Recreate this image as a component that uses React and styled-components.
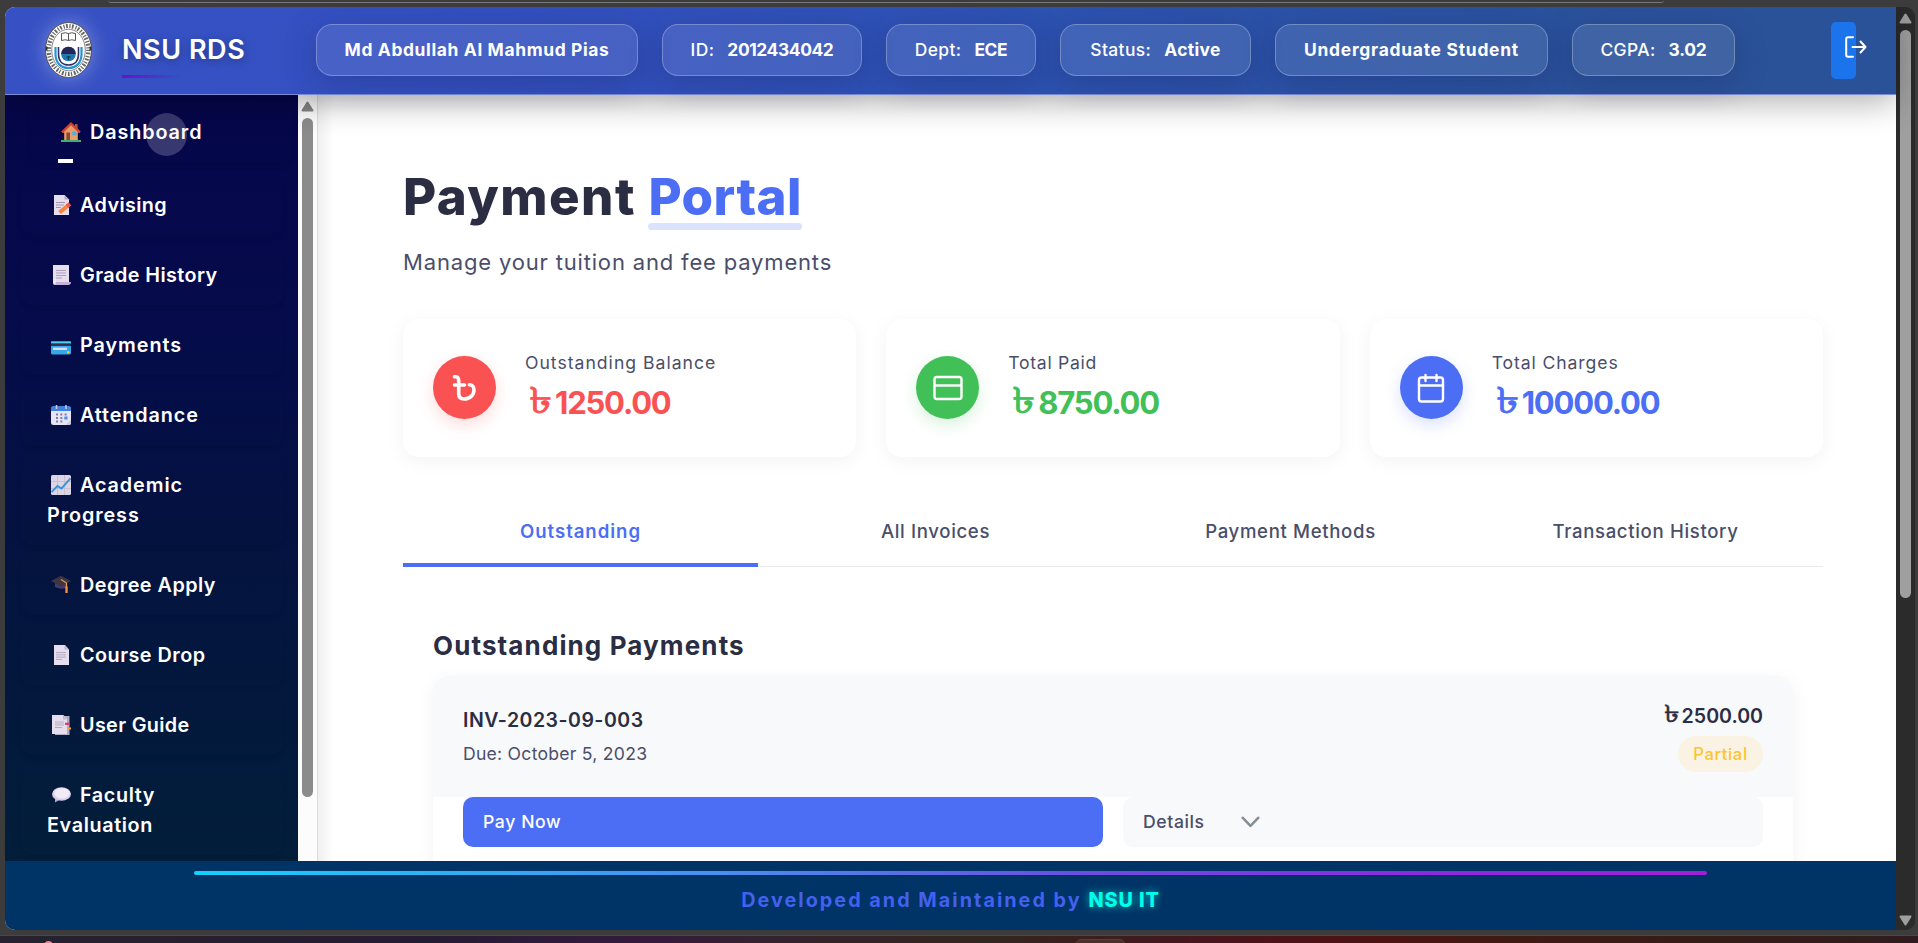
import React from 'react';
import styled, { createGlobalStyle, css } from 'styled-components';

const GlobalStyle = createGlobalStyle`
  * { box-sizing: border-box; }
  body { margin: 0; background: #3c3c3c; font-family: Inter, "Liberation Sans", sans-serif; overflow: hidden; }
  h1, h2, p { margin: 0; }
  button { font-family: inherit; border: 0; }
`;

/* ---------- browser frame ---------- */
const Frame = styled.div`
  width: 1918px;
  height: 943px;
  display: flex;
  flex-direction: column;
  overflow: hidden;
  background: #3c3c3c;
`;
const AddressEdge = styled.div`
  height: 7px;
  flex: none;
  display: flex;
  padding: 0 254px 0 108px;
  &::before {
    content: '';
    flex: 1;
    height: 2px;
    border-bottom: 1px solid #777;
    border-radius: 0 0 8px 8px;
  }
`;
const Window = styled.div`
  height: 923px;
  flex: none;
  margin: 0 3px 0 5px;
  display: flex;
  border-radius: 10px;
  overflow: hidden;
  background: #2b2b2b;
`;
const Desktop = styled.div`
  margin-top: 5px;
  height: 8px;
  flex: none;
  border-top: 1px solid #4a474b;
  background: linear-gradient(90deg, #26222e 0%, #241c33 22%, #351a3b 34%, #33242c 42%, #33251f 52%, #46151e 63%, #4d1213 71%, #401a12 78%, #351c17 88%, #301c20 100%);
  display: flex;
`;
const DesktopDot = styled.span`
  width: 9px;
  height: 9px;
  margin: 5px 0 0 44px;
  border-radius: 50%;
  background: #ff7d90;
`;
const DesktopTile = styled.span`
  width: 49px;
  height: 10px;
  margin: 3px 0 0 1023px;
  border-radius: 6px;
  background: #4b3029;
  border: 1px solid #5c4038;
`;
const Page = styled.div`
  width: 1891px;
  flex: none;
  display: flex;
  flex-direction: column;
  background: #fff;
`;

/* ---------- scroll bars ---------- */
const Track = styled.div`
  width: ${p => p.$w}px;
  flex: none;
  display: flex;
  flex-direction: column;
  align-items: center;
  background: ${p => p.$bg};
  padding: ${p => p.$pad};
  svg { flex: none; display: block; }
`;
const Thumb = styled.div`
  width: 11px;
  height: ${p => p.$h}px;
  margin-top: 6px;
  border-radius: 6px;
  background: ${p => p.$c};
`;
const Spacer = styled.div`flex: 1;`;
const Arrow = ({ color, down }) => (
  <svg width="13" height="11" viewBox="0 0 13 11">
    <path d={down ? 'M1.5 1.5h10L6.5 9.5z' : 'M1.5 9.5h10L6.5 1.5z'} fill={color} stroke={color} strokeWidth="2" strokeLinejoin="round" />
  </svg>
);

/* ---------- header ---------- */
const Header = styled.header`
  height: 88px;
  flex: none;
  position: relative;
  z-index: 3;
  display: flex;
  align-items: center;
  padding: 0 40px 2px;
  background: linear-gradient(100deg, #3751c5 0%, #3350bf 28%, #2d52b3 52%, #2a529b 84%, #2a5298 100%);
  border-bottom: 1px solid #7b8cd6;
  box-shadow: 0 8px 32px rgba(0, 0, 0, 0.3);
`;
const Crest = styled.svg`
  width: 47px;
  height: 56px;
  flex: none;
  overflow: visible;
  border-radius: 50%;
  box-shadow: 0 0 20px rgba(255, 255, 255, 0.32);
`;
const Brand = styled.div`
  width: 194px;
  flex: none;
  margin-left: 30px;
  padding-top: 10px;
  font-size: 27px;
  line-height: 36px;
  font-weight: 600;
  letter-spacing: 0.55px;
  color: #fff;
  text-shadow: 0 2px 8px rgba(0, 0, 0, 0.3);
  &::after {
    content: '';
    display: block;
    width: 60px;
    height: 3px;
    margin-top: 7px;
    background: linear-gradient(90deg, #6a11cb, rgba(106, 17, 203, 0));
  }
`;
const Chips = styled.div`
  display: flex;
  gap: 24px;
`;
const Chip = styled.div`
  width: ${p => p.$w}px;
  height: 52px;
  display: flex;
  align-items: center;
  justify-content: center;
  gap: 13px;
  white-space: nowrap;
  border: 1px solid rgba(255, 255, 255, 0.26);
  border-radius: 16px;
  background: rgba(255, 255, 255, 0.1);
  box-shadow: 0 8px 32px rgba(31, 38, 95, 0.32);
  color: #fff;
  font-size: 17.4px;
  font-weight: 500;
  letter-spacing: 0.4px;
`;
const ChipValue = styled.b`
  font-weight: 700;
  letter-spacing: ${p => p.$ls}px;
`;
const Logout = styled.button`
  width: 25px;
  height: 57px;
  margin: 2px 0 0 auto;
  padding: 0 0 8px 14px;
  display: flex;
  align-items: center;
  border-radius: 5px;
  background: #1b74ec;
  svg { flex: none; }
`;

/* ---------- body ---------- */
const Body = styled.div`
  height: 766px;
  flex: none;
  display: flex;
  overflow: hidden;
`;
const Sidebar = styled.nav`
  width: 293px;
  flex: none;
  padding: 10px 15px 0 16px;
  display: flex;
  flex-direction: column;
  gap: 10px;
  background: linear-gradient(180deg, #06064b 0%, #050b4b 28%, #04133f 60%, #021e3a 100%);
`;
const NavItem = styled.a`
  flex: none;
  position: relative;
  padding: 15px 26px;
  border-radius: 12px;
  box-shadow: 0 4px 6px -2px rgba(0, 0, 0, 0.12);
  color: #fff;
  font-size: 19.8px;
  line-height: 30px;
  font-weight: 600;
  letter-spacing: ${p => p.$ls}px;
  white-space: pre-line;
  svg { width: 20px; height: 20px; vertical-align: -3px; margin: 0 9px 0 4px; }
  ${p => p.$active && css`
    transform: translate(10px, -3px);
    &::before {
      content: '';
      position: absolute;
      left: 115px;
      top: 11px;
      width: 41px;
      height: 43px;
      border-radius: 50%;
      background: rgba(255, 255, 255, 0.2);
    }
    &::after {
      content: '';
      position: absolute;
      left: 27px;
      bottom: -1px;
      width: 15px;
      height: 4px;
      background: #fff;
    }
  `}
`;
const Main = styled.main`
  flex: 1;
  padding: 72px 73px 0 85px;
  border-left: 1px solid #ddd;
  background: linear-gradient(90deg, #f0f0f0 0, #fff 16px);
`;
const Title = styled.h1`
  font-size: 51px;
  line-height: 60px;
  font-weight: 800;
  letter-spacing: 1.45px;
  color: #2b2d42;
`;
const Accent = styled.span`
  display: inline-block;
  position: relative;
  width: 154px;
  letter-spacing: 0.4px;
  color: #4c6ef5;
  &::after {
    content: '';
    position: absolute;
    left: 0;
    right: 0;
    bottom: -3px;
    height: 7px;
    border-radius: 4px;
    background: #dbe2fd;
  }
`;
const Subtitle = styled.p`
  margin-top: 18px;
  font-size: 22px;
  line-height: 34px;
  letter-spacing: 0.83px;
  color: #4a4e69;
`;
const Cards = styled.div`
  margin-top: 40px;
  display: grid;
  grid-template-columns: repeat(3, 1fr);
  gap: 30px;
`;
const Card = styled.section`
  height: 138px;
  padding: 0 30px;
  display: flex;
  align-items: center;
  gap: 29px;
  border-radius: 16px;
  background: #fff;
  box-shadow: 0 4px 20px rgba(0, 0, 0, 0.05);
`;
const Badge = styled.div`
  width: 63px;
  height: 63px;
  flex: none;
  margin-bottom: 1px;
  border-radius: 50%;
  display: grid;
  place-items: center;
  background: ${p => p.$c};
  box-shadow: 0 6px 16px ${p => p.$c}33;
`;
const CardText = styled.div`
  padding-top: 1px;
  display: flex;
  flex-direction: column;
  gap: 3px;
`;
const CardLabel = styled.span`
  font-size: 17.6px;
  line-height: 26px;
  letter-spacing: ${p => p.$ls}px;
  color: #4a4e69;
`;
const CardValue = styled.span`
  display: flex;
  font-size: 31px;
  line-height: 48px;
  font-weight: 700;
  letter-spacing: -1.2px;
  color: ${p => p.$c};
`;
const Taka = styled.span`
  display: block;
  width: ${p => p.$w}px;
  padding-left: ${p => p.$pl}px;
  font-size: ${p => p.$s}px;
  font-weight: 400;
  letter-spacing: 0;
  -webkit-text-stroke: ${p => p.$s / 50}px currentColor;
  i {
    display: inline-block;
    font-style: normal;
    transform: translateY(-0.1em) scale(1.25, 0.96);
    transform-origin: left;
  }
`;
const Tabs = styled.div`
  height: 70px;
  margin-top: 40px;
  display: grid;
  grid-template-columns: repeat(4, 1fr);
  border-bottom: 1px solid #e9ecef;
`;
const Tab = styled.div`
  position: relative;
  padding-bottom: 2px;
  display: grid;
  place-items: center;
  font-size: 18.6px;
  font-weight: 500;
  letter-spacing: 0.65px;
  color: #4a4e69;
  ${p => p.$active && css`
    color: #4c6ef5;
    font-weight: 600;
    letter-spacing: 0.95px;
    &::after {
      content: '';
      position: absolute;
      left: 0;
      right: 0;
      bottom: -1px;
      height: 4px;
      background: #4c6ef5;
    }
  `}
`;
const Section = styled.section`
  padding: 59px 30px 0;
`;
const SectionTitle = styled.h2`
  font-size: 26px;
  line-height: 39px;
  font-weight: 700;
  letter-spacing: 1.12px;
  color: #2b2d42;
`;
const Invoice = styled.article`
  height: 240px;
  margin-top: 11px;
  border-radius: 16px;
  overflow: hidden;
  background: #fff;
  box-shadow: 0 4px 20px rgba(0, 0, 0, 0.05);
`;
const InvoiceHead = styled.div`
  height: 121px;
  padding: 25px 30px 0;
  display: flex;
  justify-content: space-between;
  background: #f8f9fb;
`;
const InvoiceInfo = styled.div`
  padding-top: 4px;
  display: flex;
  flex-direction: column;
  gap: 5px;
`;
const InvoiceNo = styled.span`
  font-size: 19.5px;
  line-height: 30px;
  font-weight: 600;
  letter-spacing: 0.5px;
  color: #2b2d42;
`;
const Due = styled.span`
  font-size: 17.6px;
  line-height: 28px;
  letter-spacing: 0.25px;
  color: #4a4e69;
`;
const InvoiceSum = styled.div`
  display: flex;
  flex-direction: column;
  align-items: flex-end;
  gap: 5px;
`;
const Amount = styled.span`
  display: flex;
  font-size: 19.6px;
  line-height: 30px;
  font-weight: 600;
  color: #2b2d42;
`;
const Pill = styled.span`
  width: 85px;
  height: 36px;
  display: grid;
  place-items: center;
  border-radius: 18px;
  background: #faf3e3;
  color: #fdc52c;
  font-size: 16.6px;
  font-weight: 500;
  letter-spacing: 0.6px;
`;
const Actions = styled.div`
  padding: 0 30px;
  display: grid;
  grid-template-columns: 1fr 1fr;
  gap: 20px;
`;
const Action = styled.button`
  height: 50px;
  padding: 0 20px 1px;
  display: flex;
  align-items: center;
  gap: 36px;
  border-radius: 10px;
  font-size: 17.6px;
  font-weight: 500;
  letter-spacing: 0.6px;
  background: ${p => (p.$primary ? '#4c6ef5' : '#f8f9fb')};
  color: ${p => (p.$primary ? '#fff' : '#4a4e69')};
`;

/* ---------- footer ---------- */
const Footer = styled.footer`
  flex: 1;
  position: relative;
  z-index: 2;
  display: flex;
  flex-direction: column;
  align-items: center;
  padding-top: 10px;
  background: #003366;
  font-size: 19.8px;
  line-height: 30px;
  font-weight: 700;
  letter-spacing: 2.02px;
  color: #4361ee;
  &::before {
    content: '';
    width: 1513px;
    height: 4px;
    margin-bottom: 10px;
    border-radius: 2px;
    background: linear-gradient(90deg, #16d0fb, #4a8df0 35%, #6a4fe0 58%, #8b2be0 80%, #a01fd6);
  }
`;
const Unit = styled.span`
  font-weight: 800;
  letter-spacing: 0.9px;
  color: #00ffea;
  text-shadow: 0 0 8px rgba(0, 255, 234, 0.7);
`;

/* ---------- sidebar pictures ---------- */
const paper = '#e6deef';
const icons = {
  home: <g><path d="M3.2 9h13.6v10H3.2z" fill="#e8a06b" /><path d="M14 2h2.6v5H14z" fill="#b5543c" /><path d="M1 10.4 10 1.6l9 8.8" fill="#e8a06b" stroke="#d9432f" strokeWidth="2.2" /><path d="M5.4 10.5H9V18H5.4z" fill="#8b4a33" /><path d="M11.3 9.5h4v4h-4z" fill="#43b3f2" /><path d="M0 18h20v2H0z" fill="#3fae6f" /></g>,
  memo: <g><path d="M3 0h10.5L18 4.5V20H3z" fill={paper} /><path d="M13.5 0v4.5H18z" fill="#b6aac6" /><path d="M5 7.5h9M5 10h8M5 12.5h5" stroke="#9c95a8" strokeWidth="1" /><path d="m8.5 17.5 8.5-7" stroke="#fb8340" strokeWidth="4" /><path d="m16 11.3 3-2.4" stroke="#f4544e" strokeWidth="4" /></g>,
  scroll: <g><path d="M2 0h16v17H2z" fill={paper} /><path d="M2 14h3v6H4a2 2 0 0 1-2-2z" fill="#eee8f4" /><path d="M5 17h15a3 3 0 0 1-3 3H4z" fill="#c8b0dc" /><path d="M5 5.500h10M5 8h10M5 10.500h10M5 13h6" stroke="#aaa2b5" strokeWidth="1" /></g>,
  card: <g><rect y="6.500" width="20" height="13" rx="1.500" fill="#35a7e8" /><path d="M0 7.200h20" stroke="#55d5ee" strokeWidth="1.400" /><path d="M0 9.700h20" stroke="#332d4d" strokeWidth="2.500" /><path d="M2 13.800h14" stroke="#d8dce8" strokeWidth="2.400" /><path d="M16 17.200h2.500" stroke="#ffc83d" strokeWidth="2" /></g>,
  calendar: <g><rect y="1.500" width="20" height="18.500" rx="2.500" fill="#e7e4f5" /><path d="M0 6V4a3 3 0 0 1 3-3h14a3 3 0 0 1 3 3v2z" fill="#3f83dc" /><path d="M5.500 0v4M15 0v4" stroke="#c9c4da" strokeWidth="1.600" /><path d="M5 9.500h11M5 13h11M5 16.500h8" stroke="#857f9c" strokeWidth="2" strokeDasharray="2 2.300" /><path d="M13.500 11.500h3v3h-3z" fill="#3f97ea" /><path d="M20 14.500V18a2 2 0 0 1-2 2h-3z" fill="#cfc9e4" /></g>,
  chart: <g><rect width="20" height="20" rx="1.500" fill="#dcd5e6" /><path d="M6.500 0v20M13.500 0v20M0 6.500h20M0 13.500h20" stroke="#c2bace" strokeWidth=".8" /><path d="m.500 17 6-6 4 2.500 9-10" fill="none" stroke="#3a92d8" strokeWidth="1.900" /></g>,
  cap: <g><path d="M4 7h11v6q-5 2-11-1z" fill="#4b3768" /><path d="M0 6 10 .8 20 6l-10 5.500z" fill="#3d3444" /><path d="M10 4.500 15.500 8v5" fill="none" stroke="#e29b3c" strokeWidth="1.300" /><path d="M15.500 11.500V18" stroke="#f78a3c" strokeWidth="2.400" /></g>,
  page: <g><path d="M3 0h11l4 4.500V20H3z" fill={paper} /><path d="M13.500 0v4.500H18z" fill="#c1b6d0" /><path d="M5 7.500h10M5 9.800h10M5 12.100h10M5 14.400h6" stroke="#b1a9bd" strokeWidth="1" /></g>,
  tabs: <g><path d="M4 1h14.500v19H4z" fill="#b3abc2" /><path d="M1 0h11.300L16 4v15H1z" fill={paper} /><path d="M12 0v4.500h4z" fill="#c1b6d0" /><path d="M4 6h9v5H4z" fill="#cdc5d8" /><path d="M4 12.500h7" stroke="#b1a9bd" /><path d="M14 8.800h4.500" stroke="#e6336a" strokeWidth="2.200" /><path d="M16.500 13.500H20" stroke="#f0a93c" strokeWidth="2" /></g>,
  bubble: <g><path d="M4 13v4.500l5-3z" fill="#b8a5d2" /><ellipse cx="10.500" cy="9" rx="9.500" ry="6.800" fill="#d9cde8" /><ellipse cx="11" cy="8.200" rx="7.800" ry="5.200" fill="#f1ebf6" /></g>,
};
const nav = [
  ['home', 'Dashboard', 0.9],
  ['memo', 'Advising', 0.4],
  ['scroll', 'Grade History', 0.4],
  ['card', 'Payments', 0.95],
  ['calendar', 'Attendance', 0.9],
  ['chart', 'Academic\nProgress', 0.9],
  ['cap', 'Degree Apply', 0.48],
  ['page', 'Course Drop', 0.48],
  ['tabs', 'User Guide', 0.35],
  ['bubble', 'Faculty\nEvaluation', 0.62],
];
const chips = [
  [322, '', 'Md Abdullah Al Mahmud Pias', 0.65],
  [200, 'ID:', '2012434042', -0.4],
  [150, 'Dept:', 'ECE', -0.4],
  [191, 'Status:', 'Active', 0.35],
  [273, '', 'Undergraduate Student', 0.75],
  [163, 'CGPA:', '3.02', -0.2],
];

const TakaIcon = () => (
  <svg width="25" height="28" viewBox="0 0 25 28" fill="none" stroke="#fff" strokeWidth="3.600" strokeLinecap="round">
    <path d="M2.500 2.800c3-.5 4.200 1 4.200 4v13c0 3.600 2 5.200 5.300 5.200 6 0 10-4 10-9 0-3.300-1.800-5.200-4.600-5.200M2.500 11h10" />
  </svg>
);
const CardIcon = () => (
  <svg width="32" height="32" viewBox="0 0 32 32" fill="none" stroke="#fff" strokeWidth="2.400">
    <rect x="2.500" y="5" width="27" height="22" rx="2.500" /><path d="M2.500 13.500h27" />
  </svg>
);
const CalendarIcon = () => (
  <svg width="32" height="32" viewBox="0 0 32 32" fill="none" stroke="#fff" strokeWidth="2.400" strokeLinecap="round">
    <rect x="4" y="5.500" width="24" height="24" rx="2.500" /><path d="M4 13.500h24M10.500 3v6M21.500 3v6" />
  </svg>
);
const Logo = () => (
  <Crest viewBox="0 0 47 56">
    <ellipse cx="23.500" cy="28" rx="23" ry="27.500" fill="#fff" stroke="#555" />
    <ellipse cx="23.500" cy="28" rx="19.800" ry="24" fill="none" stroke="#666" strokeWidth="4.200" strokeDasharray="1.200 1.400 1.800 1.700" />
    <ellipse cx="23.500" cy="28" rx="16.800" ry="20.800" fill="#fff" stroke="#555" strokeWidth=".7" />
    <path d="M16.500 11.500q4-1.500 7 0 3-1.500 7 0v7q-4-1.500-7 0-3-1.500-7 0zM23.500 11.500v7" fill="#fff" stroke="#555" />
    <path d="M1.500 24.500v4M45.500 24.500v4" stroke="#333" strokeWidth="2" />
    <path d="M10.500 25v7c0 9 5.500 14 13 14s13-5 13-14v-7" fill="none" stroke="#2795d2" strokeWidth="2.200" />
    <path d="M13.500 25v7c0 7 4 11 10 11s10-4 10-11v-7" fill="none" stroke="#332d68" strokeWidth="1.600" />
    <circle cx="23.500" cy="32" r="7.300" fill="#1f78b0" />
    <path d="M16.200 32a7.300 7.300 0 0 1 14.600 0z" fill="#2a2558" />
    <path d="m20 30 3.500-4 3.500 4M23.500 34v4m-2-3h4" stroke="#18304f" strokeWidth="1.200" fill="none" />
  </Crest>
);

const summary = [
  ['#fa5252', TakaIcon, 'Outstanding Balance', 1, '1250.00'],
  ['#40c057', CardIcon, 'Total Paid', 0.7, '8750.00'],
  ['#4c6ef5', CalendarIcon, 'Total Charges', 0.9, '10000.00'],
];

export default function App() {
  return (
    <Frame>
      <GlobalStyle />
      <AddressEdge />
      <Window>
        <Page>
          <Header>
            <Logo />
            <Brand>NSU RDS</Brand>
            <Chips>
              {chips.map(([w, label, value, ls]) => (
                <Chip key={value} $w={w}>
                  {label && <span>{label}</span>}
                  <ChipValue $ls={ls}>{value}</ChipValue>
                </Chip>
              ))}
            </Chips>
            <Logout aria-label="Log out">
              <svg width="22" height="22" viewBox="0 0 22 22" fill="none" stroke="#fff" strokeWidth="2" strokeLinecap="round" strokeLinejoin="round">
                <path d="M8 1.200H3A1.800 1.800 0 0 0 1.200 3v16A1.800 1.800 0 0 0 3 20.800h5M7.500 11h13M15.500 5.500l5 5.500-5 5.500" />
              </svg>
            </Logout>
          </Header>
          <Body>
            <Sidebar>
              {nav.map(([icon, label, ls]) => (
                <NavItem key={label} $ls={ls} $active={icon === 'home'}>
                  <svg viewBox="0 0 20 20">{icons[icon]}</svg>
                  {label}
                </NavItem>
              ))}
            </Sidebar>
            <Track $w={19} $bg="#fcfcfc" $pad="6px 0 0">
              <Arrow color="#858585" />
              <Thumb $h={679} $c="#8b8b8b" />
            </Track>
            <Main>
              <Title>Payment <Accent>Portal</Accent></Title>
              <Subtitle>Manage your tuition and fee payments</Subtitle>
              <Cards>
                {summary.map(([color, Icon, label, ls, value]) => (
                  <Card key={label}>
                    <Badge $c={color}><Icon /></Badge>
                    <CardText>
                      <CardLabel $ls={ls}>{label}</CardLabel>
                      <CardValue $c={color}><Taka $w={30} $pl={4} $s={38}><i>৳</i></Taka>{value}</CardValue>
                    </CardText>
                  </Card>
                ))}
              </Cards>
              <Tabs>
                <Tab $active>Outstanding</Tab>
                <Tab>All Invoices</Tab>
                <Tab>Payment Methods</Tab>
                <Tab>Transaction History</Tab>
              </Tabs>
              <Section>
                <SectionTitle>Outstanding Payments</SectionTitle>
                <Invoice>
                  <InvoiceHead>
                    <InvoiceInfo>
                      <InvoiceNo>INV-2023-09-003</InvoiceNo>
                      <Due>Due: October 5, 2023</Due>
                    </InvoiceInfo>
                    <InvoiceSum>
                      <Amount><Taka $w={18} $pl={0} $s={25}><i>৳</i></Taka>2500.00</Amount>
                      <Pill>Partial</Pill>
                    </InvoiceSum>
                  </InvoiceHead>
                  <Actions>
                    <Action $primary>Pay Now</Action>
                    <Action>
                      Details
                      <svg width="19" height="12" viewBox="0 0 19 12" fill="none" stroke="#868e96" strokeWidth="2.600" strokeLinecap="round" strokeLinejoin="round"><path d="m1.800 1.800 7.700 8 7.700-8" /></svg>
                    </Action>
                  </Actions>
                </Invoice>
              </Section>
            </Main>
          </Body>
          <Footer>
            <div>Developed and Maintained by <Unit>NSU IT</Unit></div>
          </Footer>
        </Page>
        <Track $w={19} $bg="#2b2b2b" $pad="6px 0 4px">
          <Arrow color="#9f9f9f" />
          <Thumb $h={568} $c="#9f9f9f" />
          <Spacer />
          <Arrow color="#9f9f9f" down />
        </Track>
      </Window>
      <Desktop><DesktopDot /><DesktopTile /></Desktop>
    </Frame>
  );
}
